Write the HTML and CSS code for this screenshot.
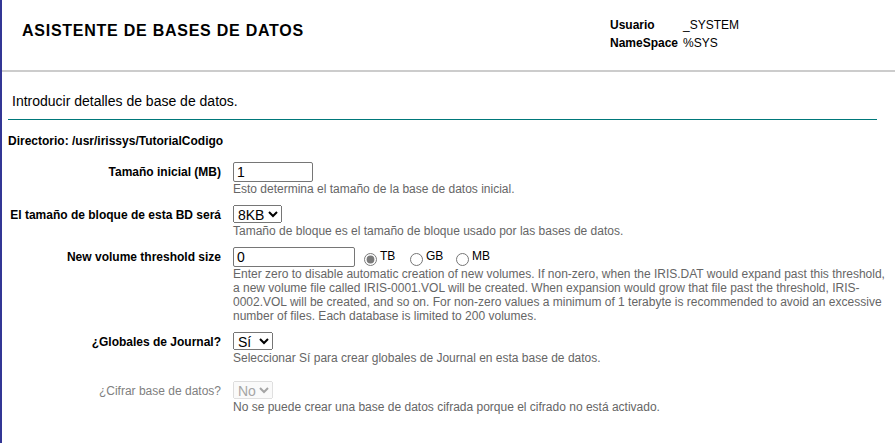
FILE: index.html
```html
<!DOCTYPE html>
<html lang="es">
<head>
    <meta charset="UTF-8">
    <title>Asistente de bases de datos</title>
    <link rel="stylesheet" href="styles.css">
</head>
<body>
    <div class="page">
        <div class="header">
            <div class="title">ASISTENTE DE BASES DE DATOS</div>
            <table class="info">
                <tr><td class="info-label">Usuario</td><td>_SYSTEM</td></tr>
                <tr><td class="info-label">NameSpace</td><td>%SYS</td></tr>
            </table>
        </div>

        <div class="content">
            <div class="intro">Introducir detalles de base de datos.</div>
            <div class="directory">Directorio: /usr/irissys/TutorialCodigo</div>

            <table class="form">
                <tr>
                    <td class="label">Tamaño inicial (MB)</td>
                    <td class="field">
                        <input type="text" class="size-input" value="1">
                        <div class="help">Esto determina el tamaño de la base de datos inicial.</div>
                    </td>
                </tr>
                <tr>
                    <td class="label">El tamaño de bloque de esta BD será</td>
                    <td class="field">
                        <select><option>8KB</option></select>
                        <div class="help">Tamaño de bloque es el tamaño de bloque usado por las bases de datos.</div>
                    </td>
                </tr>
                <tr>
                    <td class="label">New volume threshold size</td>
                    <td class="field">
                        <div class="threshold">
                            <input type="text" class="threshold-input" value="0">
                            <label class="unit"><input type="radio" name="unit" checked>TB</label>
                            <label class="unit"><input type="radio" name="unit">GB</label>
                            <label class="unit"><input type="radio" name="unit">MB</label>
                        </div>
                        <div class="help">Enter zero to disable automatic creation of new volumes. If non-zero, when the IRIS.DAT would expand past this threshold, a new volume file called IRIS-0001.VOL will be created. When expansion would grow that file past the threshold, IRIS-0002.VOL will be created, and so on. For non-zero values a minimum of 1 terabyte is recommended to avoid an excessive number of files. Each database is limited to 200 volumes.</div>
                    </td>
                </tr>
                <tr>
                    <td class="label">¿Globales de Journal?</td>
                    <td class="field">
                        <select><option>Sí</option><option>No</option></select>
                        <div class="help">Seleccionar Sí para crear globales de Journal en esta base de datos.</div>
                    </td>
                </tr>
                <tr class="spaced">
                    <td class="label disabled">¿Cifrar base de datos?</td>
                    <td class="field">
                        <select disabled><option>No</option></select>
                        <div class="help">No se puede crear una base de datos cifrada porque el cifrado no está activado.</div>
                    </td>
                </tr>
            </table>
        </div>
    </div>
</body>
</html>
```

FILE: styles.css
```css
html, body {
    margin: 0;
    padding: 0;
    height: 100%;
}

body {
    font-family: "Liberation Sans", Arial, sans-serif;
    font-size: 12px;
    color: #000;
    background: #fff;
}

.page {
    min-height: 100%;
    border-left: 2px solid #333695;
    box-sizing: border-box;
}

.header {
    display: flex;
    align-items: flex-start;
    height: 70px;
    border-bottom: 2px solid #cccccc;
}

.title {
    margin: 22px 0 0 20px;
    font-size: 16px;
    font-weight: bold;
    letter-spacing: 0.75px;
    width: 588px;
}

.info {
    margin-top: 16px;
    border-collapse: collapse;
    font-size: 12px;
}

.info td {
    padding: 0 2px 0 0;
    line-height: 18px;
}

.info-label {
    font-weight: bold;
    width: 71px;
}

.content {
    padding: 0 0 0 6px;
}

.intro {
    font-size: 14px;
    margin-right: 18px;
    padding: 21px 0 10px 4px;
    border-bottom: 1px solid #00787a;
}

.directory {
    font-weight: bold;
    margin: 14px 0 0 0;
}

.form {
    border-collapse: collapse;
    margin-top: 5px;
}

.form td {
    vertical-align: top;
    padding: 9px 0 0 0;
}

.form .spaced td {
    padding-top: 16px;
}

.form td.label {
    width: 213px;
    text-align: right;
    font-weight: bold;
    padding-right: 12px;
    padding-top: 12px;
    white-space: nowrap;
}

.form .spaced td.label {
    padding-top: 19px;
}

.form td.label.disabled {
    font-weight: normal;
    color: #808080;
}

input[type="text"], select {
    font-family: "Liberation Sans", Arial, sans-serif;
    font-size: 14px;
    margin: 0;
}

input[type="text"] {
    height: 20px;
    box-sizing: border-box;
    padding: 1px 3px;
    border: 1px solid #767676;
    border-radius: 2px;
}

.size-input {
    width: 80px;
}

.threshold-input {
    width: 122px;
    margin-right: 9px !important;
}

select {
    height: 18px;
    padding: 0;
    margin-bottom: 1px;
}

.threshold {
    display: flex;
    align-items: center;
    height: 20px;
}

.unit {
    font-size: 12px;
    width: 46px;
    display: inline-flex;
    align-items: flex-start;
}

.unit input {
    margin: 4px 3px 0 0;
    accent-color: #7a7a7a;
}

.help {
    color: #666666;
    font-size: 12px;
    line-height: 14px;
    width: 656px;
}
```
